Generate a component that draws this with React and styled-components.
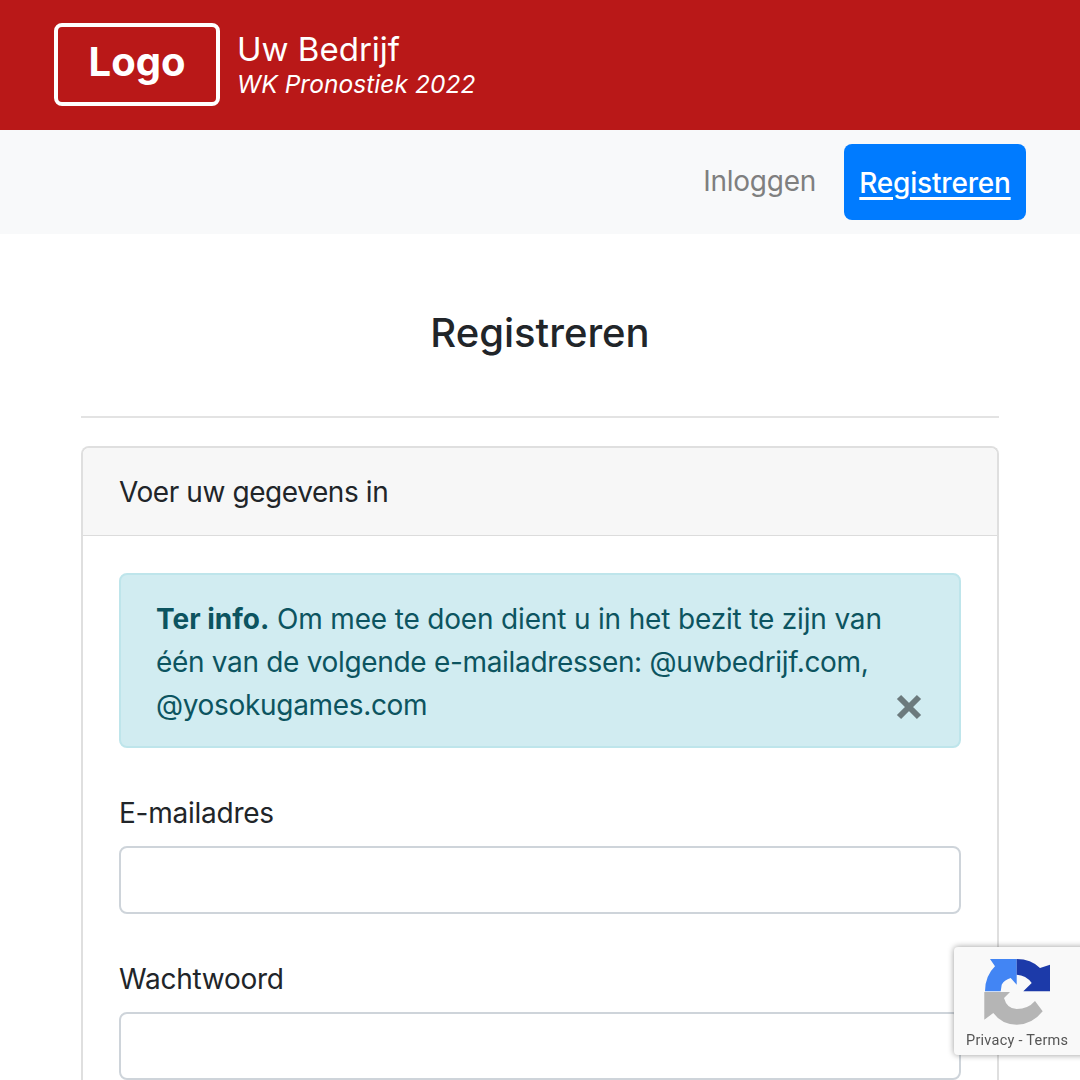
import React from 'react';
import styled, { createGlobalStyle } from 'styled-components';

const GlobalStyle = createGlobalStyle`
  html, body {
    margin: 0;
    padding: 0;
    height: 1080px;
    overflow: hidden;
    background: #fff;
    font-family: Inter, "Liberation Sans", sans-serif;
    color: #212529;
  }
  * { box-sizing: border-box; }
`;

const Banner = styled.header`
  height: 130px;
  background: #b91818;
  display: flex;
  align-items: flex-start;
  padding: 23px 0 0 54px;
  gap: 17px;
  color: #fff;
`;

const LogoBox = styled.div`
  width: 166px;
  height: 83px;
  border: 4px solid #fff;
  border-radius: 8px;
  display: flex;
  align-items: center;
  justify-content: center;
  padding-bottom: 7px;
  font-size: 40px;
  font-weight: 700;
`;

const BrandText = styled.div`
  display: flex;
  flex-direction: column;
  padding-top: 7px;
`;

const BrandName = styled.div`
  font-size: 33px;
  line-height: 38px;
  letter-spacing: 0;
`;

const BrandSub = styled.div`
  font-size: 24.5px;
  line-height: 32px;
  letter-spacing: 0.05px;
  font-style: italic;
`;

const NavBar = styled.nav`
  height: 104px;
  background: #f8f9fa;
  display: flex;
  align-items: center;
  justify-content: flex-end;
  padding: 0 54px 0 0;
  gap: 28px;
`;

const NavLink = styled.a`
  font-size: 28px;
  letter-spacing: -0.25px;
  color: #7f7f7f;
  padding-bottom: 2px;
`;

const NavButton = styled.a`
  width: 182px;
  height: 76px;
  padding-top: 2px;
  background: #007bff;
  border-radius: 8px;
  display: flex;
  align-items: center;
  justify-content: center;
  color: #fff;
  font-size: 28px;
  font-weight: 500;
  letter-spacing: -0.2px;
  text-decoration: underline;
  text-decoration-thickness: 2.5px;
  text-underline-offset: 4px;
`;

const Main = styled.main`
  padding: 0 81px;
`;

const Heading = styled.h1`
  margin: 0;
  height: 184px;
  padding-top: 73px;
  font-size: 40px;
  line-height: 52px;
  font-weight: 500;
  text-align: center;
  border-bottom: 2px solid #e3e3e3;
`;

const Card = styled.section`
  margin-top: 28px;
  border: 2px solid #dfdfdf;
  border-radius: 8px 8px 0 0;
  border-bottom: none;
`;

const CardHeader = styled.div`
  height: 88px;
  padding: 0 36px;
  background: #f7f7f7;
  border-bottom: 1px solid #dcdcdc;
  border-radius: 6px 6px 0 0;
  display: flex;
  align-items: center;
  font-size: 28px;
  letter-spacing: -0.42px;
`;

const CardBody = styled.div`
  padding: 37px 36px 0;
`;

const Alert = styled.div`
  position: relative;
  height: 175px;
  padding: 23px 35px;
  background: #d1ecf1;
  border: 2px solid #bee5eb;
  border-radius: 8px;
  color: #0c5460;
  font-size: 28px;
  line-height: 43px;
  letter-spacing: -0.32px;
  margin-bottom: 46px;

  &::first-line {
    letter-spacing: -0.17px;
  }
`;

const AlertLead = styled.strong`
  letter-spacing: 0;
`;

const CloseButton = styled.span`
  position: absolute;
  right: 37px;
  bottom: 26px;
  width: 26px;
  height: 26px;
  display: flex;
`;

const Field = styled.div`
  margin-bottom: 46px;
`;

const Label = styled.label`
  display: block;
  font-size: 28px;
  line-height: 38px;
  letter-spacing: -0.25px;
  margin-bottom: 14px;
`;

const Input = styled.input`
  display: block;
  width: 100%;
  height: 68px;
  border: 2px solid #ced4da;
  border-radius: 8px;
  background: #fff;
`;

const Recaptcha = styled.div`
  position: fixed;
  left: 954px;
  top: 947px;
  width: 140px;
  height: 108px;
  background: #f9f9f9;
  border-radius: 4px;
  box-shadow: 0 0 6px rgba(0, 0, 0, 0.4);
  padding: 11px 0 0 12px;
`;

const RecaptchaSvg = styled.svg`
  display: block;
  margin-left: 18px;
`;

const RecaptchaLinks = styled.div`
  font-family: Roboto, "Liberation Sans", sans-serif;
  font-size: 14.5px;
  line-height: 16px;
  color: #555;
  margin-top: 8px;
  letter-spacing: 0.25px;
`;

const RecaptchaIcon = () => (
  <RecaptchaSvg width="66" height="67" viewBox="0 0 66 67">
    <path d="M6 1 H32.7 V26.7 L26.7 20 Q20 22 17.7 26.7 L16.7 33.3 H1 Q1 18 11 8.3 Z" fill="#4285f4" />
    <path d="M32.7 1 Q47 1 56 10 L66 6.7 V33.3 H39.3 L47.7 25 Q42 17 32.7 16.7 Z" fill="#1c3aa9" />
    <path d="M0.3 34 H26 L20 40 Q23 51 32.7 51 Q44 51 51 43 L58.7 53.3 Q48 66.7 32.7 66.7 Q18 66.7 9.3 55 L0.3 61.7 Z" fill="#b5b5b5" />
  </RecaptchaSvg>
);

function App() {
  return (
    <>
      <GlobalStyle />
      <Banner>
        <LogoBox>Logo</LogoBox>
        <BrandText>
          <BrandName>Uw Bedrijf</BrandName>
          <BrandSub>WK Pronostiek 2022</BrandSub>
        </BrandText>
      </Banner>
      <NavBar>
        <NavLink>Inloggen</NavLink>
        <NavButton>Registreren</NavButton>
      </NavBar>
      <Main>
        <Heading>Registreren</Heading>
        <Card>
          <CardHeader>Voer uw gegevens in</CardHeader>
          <CardBody>
            <Alert>
              <AlertLead>Ter info.</AlertLead> Om mee te doen dient u in het bezit te zijn van één van de volgende e-mailadressen: @uwbedrijf.com, @yosokugames.com
              <CloseButton>
                <svg width="26" height="26" viewBox="0 0 26 26">
                  <path d="M3 3 L23 23 M23 3 L3 23" stroke="#6c7a7d" strokeWidth="6" />
                </svg>
              </CloseButton>
            </Alert>
            <Field>
              <Label>E-mailadres</Label>
              <Input type="email" />
            </Field>
            <Field>
              <Label>Wachtwoord</Label>
              <Input type="password" />
            </Field>
          </CardBody>
        </Card>
      </Main>
      <Recaptcha>
        <RecaptchaIcon />
        <RecaptchaLinks>Privacy - Terms</RecaptchaLinks>
      </Recaptcha>
    </>
  );
}

export default App;
